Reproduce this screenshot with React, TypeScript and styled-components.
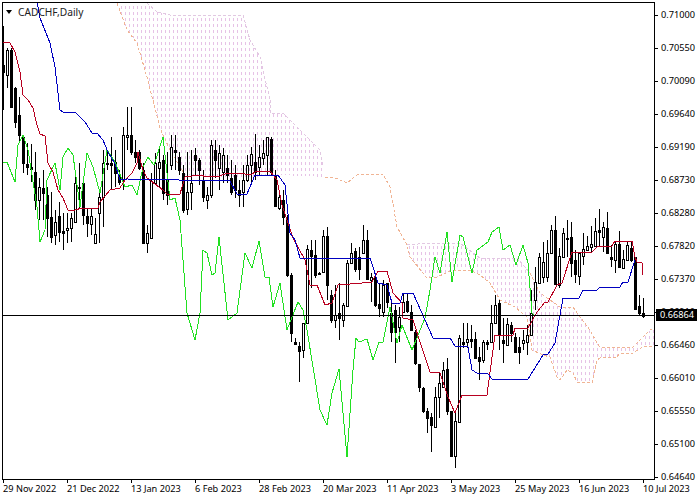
import styled, { createGlobalStyle } from "styled-components";

const GlobalStyle = createGlobalStyle`
  html, body {
    margin: 0;
    padding: 0;
    background: #fff;
  }
`;

const Page = styled.div`
  width: 700px;
  height: 500px;
  padding: 2px 0 0 2px;
  box-sizing: border-box;
  overflow: hidden;
  background: #fff;
  font-family: "Noto Sans", "Liberation Sans", sans-serif;
  font-size: 9.2px;
  color: #000;
`;

const Top = styled.div`
  display: flex;
  height: 478px;
`;

const Plot = styled.div`
  position: relative;
  width: 653px;
  height: 478px;
  box-sizing: border-box;
  border: 1px solid #000;
  flex: none;
`;

const ChartSvg = styled.svg`
  display: block;
`;

const Title = styled.div`
  position: absolute;
  left: 3px;
  top: 2px;
  display: flex;
  align-items: center;
  gap: 6px;
  height: 14px;
  font-size: 10.2px;
  color: #222;
`;

const TitleArrow = styled.span`
  width: 0;
  height: 0;
  border-left: 3.5px solid transparent;
  border-right: 3.5px solid transparent;
  border-top: 4px solid #000;
`;

const PriceAxis = styled.div`
  position: relative;
  display: flex;
  flex-direction: column;
  gap: 19px;
  padding-top: 6px;
  flex: 1;
`;

const PriceRow = styled.div`
  display: flex;
  align-items: center;
  height: 14px;
  gap: 3px;
  line-height: 14px;
`;

const PriceTick = styled.span`
  width: 3px;
  height: 1px;
  background: #000;
`;

const PriceBadge = styled.div`
  position: absolute;
  left: 1px;
  top: 307px;
  width: 41px;
  height: 12px;
  line-height: 12px;
  padding-left: 4px;
  box-sizing: border-box;
  background: #000;
  color: #fff;
`;

const DateAxis = styled.div`
  display: flex;
  padding-left: 1px;
`;

const DateCell = styled.div`
  width: 64px;
  flex: none;
  height: 19px;
  white-space: nowrap;
  line-height: 17px;
`;

const DateTick = styled.span`
  display: block;
  width: 1px;
  height: 3px;
  background: #000;
`;

const DateText = styled.span`
  display: block;
  margin-top: -3px;
`;

type Bar = [number, number, number, number, number, number];

// x, high, body top, body bottom, low, white body (page pixels)
const bars: Bar[] = [
  [3, 26, 65, 72, 110, 0], [7, 48, 50, 75, 88, 1], [11, 48, 50, 107, 108, 0], [15, 87, 88, 122, 128, 0],
  [19, 97, 115, 135, 143, 0], [23, 135, 137, 163, 173, 0], [27, 143, 164, 167, 175, 0], [31, 144, 167, 169, 182, 0],
  [35, 152, 172, 200, 210, 0], [39, 178, 187, 200, 220, 1], [43, 170, 188, 193, 220, 0], [47, 187, 195, 218, 237, 0],
  [51, 192, 217, 237, 243, 0], [55, 210, 222, 235, 245, 1], [59, 202, 216, 232, 242, 0], [63, 213, 231, 233, 250, 0],
  [67, 213, 228, 230, 243, 1], [71, 213, 218, 228, 242, 1], [75, 177, 183, 222, 222, 1], [79, 163, 187, 188, 208, 1],
  [83, 180, 183, 215, 225, 0], [87, 208, 216, 223, 237, 0], [91, 208, 216, 224, 235, 1], [95, 218, 234, 243, 243, 1],
  [99, 190, 197, 213, 243, 1], [103, 150, 163, 197, 227, 1], [107, 150, 163, 164, 170, 0], [111, 137, 163, 165, 190, 0],
  [115, 150, 162, 173, 187, 0], [119, 170, 175, 182, 185, 0], [123, 127, 135, 180, 190, 1], [127, 107, 135, 137, 150, 1],
  [131, 107, 135, 152, 155, 0], [135, 140, 152, 157, 163, 0], [139, 150, 152, 168, 170, 0], [143, 163, 170, 243, 243, 0],
  [147, 225, 233, 243, 253, 1], [151, 173, 181, 238, 238, 1], [155, 153, 163, 183, 185, 1], [159, 147, 162, 168, 187, 1],
  [163, 155, 160, 193, 200, 0], [167, 152, 180, 195, 205, 0], [171, 135, 147, 165, 170, 1], [175, 135, 150, 152, 170, 0],
  [179, 152, 157, 170, 175, 0], [183, 165, 173, 210, 213, 0], [187, 152, 192, 209, 215, 1], [191, 150, 183, 192, 210, 1],
  [195, 148, 155, 160, 175, 0], [199, 158, 160, 170, 185, 0], [203, 170, 180, 197, 202, 0], [207, 187, 195, 200, 209, 1],
  [211, 140, 145, 195, 198, 1], [215, 140, 150, 160, 178, 0], [219, 145, 153, 168, 190, 1], [223, 148, 155, 172, 183, 1],
  [227, 155, 168, 175, 183, 0], [231, 160, 178, 192, 195, 0], [235, 165, 175, 190, 198, 0], [239, 180, 190, 195, 207, 0],
  [243, 165, 180, 192, 207, 1], [247, 155, 165, 180, 182, 1], [251, 147, 154, 165, 185, 1], [255, 134, 162, 172, 180, 0],
  [259, 145, 157, 167, 175, 1], [263, 140, 153, 158, 165, 1], [267, 137, 137, 155, 175, 1], [271, 137, 139, 172, 175, 0],
  [275, 170, 175, 206, 207, 0], [279, 190, 197, 208, 210, 1], [283, 190, 200, 217, 225, 0], [287, 215, 217, 275, 277, 0],
  [291, 273, 275, 333, 342, 0], [295, 338, 342, 344, 345, 0], [299, 342, 346, 351, 382, 0], [303, 323, 323, 350, 358, 1],
  [307, 245, 249, 323, 323, 1], [311, 240, 250, 256, 288, 0], [315, 240, 255, 275, 278, 0], [319, 272, 273, 274, 275, 0],
  [323, 230, 236, 272, 272, 1], [327, 227, 236, 285, 300, 0], [331, 290, 295, 320, 323, 0], [335, 285, 315, 320, 328, 1],
  [339, 283, 313, 318, 340, 0], [343, 303, 305, 320, 327, 1], [347, 260, 263, 306, 306, 1], [351, 243, 253, 263, 263, 1],
  [355, 248, 251, 269, 272, 0], [359, 247, 257, 269, 280, 0], [363, 225, 240, 253, 253, 1], [367, 230, 240, 279, 279, 0],
  [371, 273, 277, 280, 302, 1], [375, 277, 278, 305, 307, 0], [379, 283, 304, 308, 317, 0], [383, 280, 285, 312, 317, 1],
  [387, 283, 283, 302, 308, 0], [391, 302, 313, 332, 342, 0], [395, 305, 310, 332, 363, 0], [399, 307, 317, 327, 342, 1],
  [403, 293, 302, 312, 313, 1], [407, 293, 301, 311, 313, 0], [411, 305, 312, 330, 330, 0], [415, 330, 332, 363, 365, 0],
  [419, 364, 364, 387, 392, 0], [423, 387, 388, 411, 413, 0], [427, 408, 411, 418, 433, 0], [431, 413, 417, 425, 452, 0],
  [435, 387, 397, 427, 427, 1], [439, 373, 383, 397, 418, 1], [443, 362, 370, 387, 387, 1], [447, 358, 369, 411, 415, 0],
  [451, 411, 411, 456, 456, 0], [455, 413, 421, 456, 468, 1], [459, 335, 338, 422, 422, 1], [463, 323, 342, 344, 348, 0],
  [467, 323, 339, 342, 348, 1], [471, 325, 339, 341, 348, 0], [475, 332, 339, 358, 359, 0], [479, 347, 357, 361, 380, 0],
  [483, 340, 342, 360, 363, 1], [487, 340, 342, 344, 350, 0], [491, 305, 323, 342, 342, 1], [495, 295, 305, 323, 323, 1],
  [499, 300, 303, 335, 350, 0], [503, 318, 340, 343, 363, 0], [507, 318, 324, 345, 345, 1], [511, 322, 325, 333, 342, 0],
  [515, 333, 337, 352, 353, 0], [519, 337, 347, 352, 364, 0], [523, 330, 340, 343, 350, 1], [527, 325, 335, 342, 355, 1],
  [531, 290, 313, 335, 335, 1], [535, 267, 282, 300, 310, 1], [539, 253, 257, 283, 283, 1], [543, 242, 262, 277, 283, 1],
  [547, 240, 253, 277, 282, 1], [551, 225, 230, 253, 253, 1], [555, 216, 230, 284, 285, 0], [559, 248, 256, 285, 288, 1],
  [563, 228, 233, 257, 257, 1], [567, 220, 238, 239, 257, 0], [571, 222, 237, 263, 277, 0], [575, 250, 260, 274, 283, 0],
  [579, 252, 253, 276, 285, 1], [583, 233, 249, 256, 265, 1], [587, 236, 246, 250, 250, 1], [591, 226, 244, 247, 253, 1],
  [595, 218, 231, 246, 246, 1], [599, 209, 230, 232, 246, 0], [603, 222, 227, 237, 252, 1], [607, 212, 228, 253, 253, 0],
  [611, 245, 257, 259, 267, 0], [615, 241, 244, 260, 273, 1], [619, 231, 244, 267, 268, 0], [623, 250, 259, 268, 269, 1],
  [627, 242, 245, 260, 260, 1], [631, 242, 248, 260, 262, 0], [635, 257, 257, 309, 309, 0], [639, 295, 306, 313, 315, 0],
  [643, 298, 313, 316, 318, 0],
];

const redLine =
  "3,42 10,43 15,52 20,72 23,95 28,100 33,108 37,125 40,134 45,136 48,163 53,172 58,190 63,198 68,210 75,210 82,208 98,208 100,202 110,190 120,188 125,180 132,173 137,163 138,152 143,170 147,178 163,190 167,194 180,194 185,177 200,175 207,177 220,176 227,173 240,173 250,175 257,171 270,171 277,180 282,205 293,238 305,260 310,285 317,285 325,305 332,303 338,285 362,283 372,282 378,271 387,271 393,293 402,303 403,318 413,320 422,348 430,372 440,373 448,397 455,413 462,395 487,395 495,335 513,335 515,328 528,328 537,312 545,302 548,302 557,285 562,283 572,252 592,252 598,246 612,246 615,241 632,241 635,257 637,262 642,263 643,275";

const blueLine =
  "37,2 40,18 50,43 55,67 60,110 63,112 75,112 85,122 92,133 97,133 103,140 108,152 115,164 120,180 127,179 230,181 237,194 247,194 255,175 278,175 285,185 290,233 295,240 300,258 370,258 373,267 378,283 387,285 392,303 400,303 403,293 413,293 433,338 450,338 455,346 468,347 472,370 477,373 488,374 492,379 528,379 543,355 548,354 555,343 563,298 579,298 583,290 597,290 600,287 620,287 623,282 628,282 635,260";

const greenLine =
  "3,162 7,162 15,182 18,145 23,135 28,150 37,207 40,242 45,230 47,180 55,163 60,190 63,157 68,148 73,155 80,207 87,153 93,167 100,193 107,150 115,162 125,187 132,185 137,195 143,167 148,157 154,165 163,137 170,200 175,198 180,220 187,313 195,340 200,313 203,250 207,253 212,275 215,273 219,237 228,320 237,313 245,253 252,268 259,241 265,277 269,277 273,307 280,283 287,330 298,302 303,310 307,330 320,410 327,425 332,393 339,369 347,457 353,370 356,338 359,342 367,339 373,360 379,342 383,342 390,307 397,343 402,325 412,350 425,318 430,290 435,257 440,273 447,232 452,282 460,235 463,237 472,273 477,250 488,242 492,232 499,227 503,250 510,245 516,265 523,245 528,263 532,313 535,316";

const cloudFirst =
  "117,3 127,30 137,43 147,77 160,128 170,150 185,175 240,178 280,175 325,177 323,167 320,150 310,140 283,113 270,113 270,100 260,57 250,40 243,15 170,15 157,12 147,3";

const cloudSecond =
  "407,245 430,243 460,243 480,258 517,258 530,273 540,293 560,307 573,307 580,317 590,330 597,343 600,347 633,347 643,337 650,330 654,328 654,346 643,347 633,353 620,353 617,357 600,358 597,360 592,383 577,382 573,373 567,370 560,380 557,377 550,357 543,355 532,350 527,317 515,307 500,300 490,283 480,275 470,270 453,270 437,277 427,278 410,257";

const sandyLines = [
  "117,3 127,30 137,43 147,77 160,128 170,150 185,175",
  "325,177 333,177 347,183 358,174 383,174 390,187 397,227 407,245 410,257 427,278 437,277 453,270 470,270 480,275 490,283 500,300 515,307 527,317 532,350 543,355 550,357 557,377 560,380 567,370 573,373 577,382 592,383 597,360 600,358 617,357 620,353 633,353 643,347 654,346",
  "530,273 540,293 560,307 573,307 580,317 590,330 597,343 600,347 633,347 643,337 650,330 654,328",
];

const thistleLines = [
  "147,3 157,12 170,15 243,15 250,40 260,57 270,100 270,113 283,113 310,140 320,150 323,167",
  "407,245 430,243 460,243 480,258 517,258 530,273",
];

const prices = [
  "0.71000", "0.70550", "0.70090", "0.69640", "0.69190", "0.68730", "0.68280", "0.67820",
  "0.67370", "0.66910", "0.66460", "0.66010", "0.65550", "0.65100", "0.64640",
];

const dates = [
  "29 Nov 2022", "21 Dec 2022", "13 Jan 2023", "6 Feb 2023", "28 Feb 2023", "20 Mar 2023",
  "11 Apr 2023", "3 May 2023", "25 May 2023", "16 Jun 2023", "10 Jul 2023",
];

const Candle = ({ bar }: { bar: Bar }) => {
  const [x, high, top, bottom, low, white] = bar;
  return (
    <g>
      <line x1={x + 0.5} x2={x + 0.5} y1={high} y2={low} stroke="#000" />
      <rect
        x={x - 0.5}
        y={top + 0.5}
        width={2}
        height={Math.max(bottom - top, 1)}
        fill={white ? "#fff" : "#000"}
        stroke="#000"
      />
    </g>
  );
};

const Chart = () => (
  <ChartSvg width={651} height={476} viewBox="3 3 651 476" shapeRendering="crispEdges">
    <defs>
      <pattern id="cloud" x={1} y={0} width={4} height={6} patternUnits="userSpaceOnUse">
        <rect width={1} height={3} fill="#e6c2e6" />
      </pattern>
    </defs>
    <polygon points={cloudFirst} fill="url(#cloud)" />
    <polygon points={cloudSecond} fill="url(#cloud)" />
    {thistleLines.map((points) => (
      <polyline key={points} points={points} fill="none" stroke="#e2c8e2" strokeDasharray="3 2" />
    ))}
    {sandyLines.map((points) => (
      <polyline key={points} points={points} fill="none" stroke="#f0b494" strokeDasharray="3 2" />
    ))}
    {bars.map((bar) => (
      <Candle key={bar[0]} bar={bar} />
    ))}
    <polyline points={greenLine} fill="none" stroke="#22e022" />
    <polyline points={redLine} fill="none" stroke="#b80020" />
    <polyline points={blueLine} fill="none" stroke="#0000c0" />
    <line x1={3} x2={654} y1={315.5} y2={315.5} stroke="#000" />
  </ChartSvg>
);

export default function App() {
  return (
    <Page>
      <GlobalStyle />
      <Top>
        <Plot>
          <Chart />
          <Title>
            <TitleArrow />
            CADCHF,Daily
          </Title>
        </Plot>
        <PriceAxis>
          {prices.map((price) => (
            <PriceRow key={price}>
              <PriceTick />
              {price}
            </PriceRow>
          ))}
          <PriceBadge>0.66864</PriceBadge>
        </PriceAxis>
      </Top>
      <DateAxis>
        {dates.map((date) => (
          <DateCell key={date}>
            <DateTick />
            <DateText>{date}</DateText>
          </DateCell>
        ))}
      </DateAxis>
    </Page>
  );
}
